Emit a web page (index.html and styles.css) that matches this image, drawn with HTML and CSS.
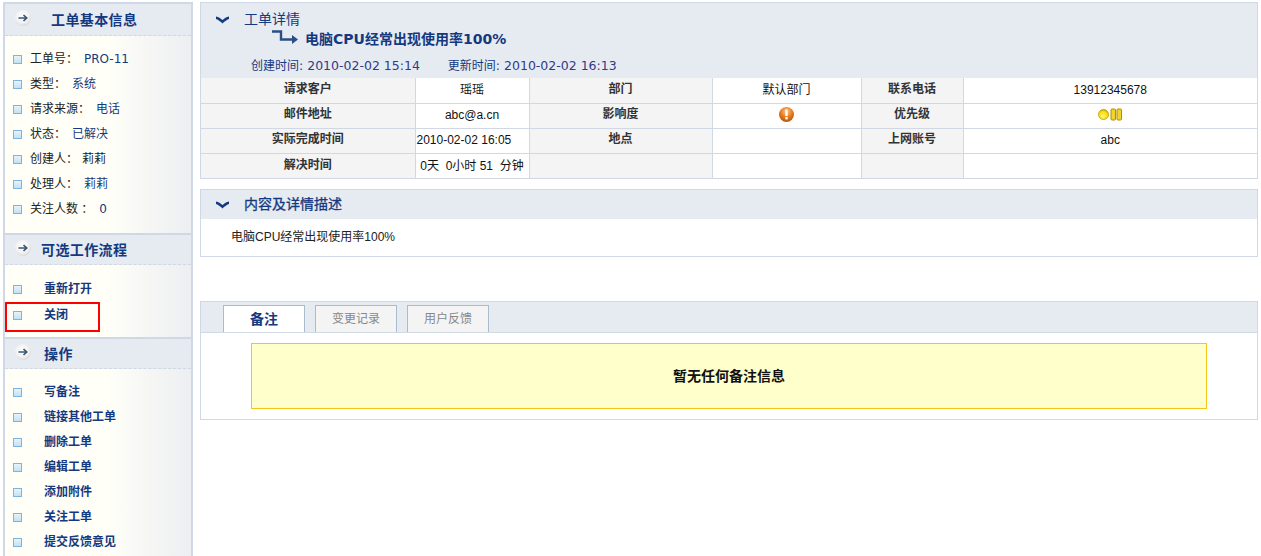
FILE: index.html
```html
<!DOCTYPE html>
<html lang="zh-CN">
<head>
<meta charset="utf-8">
<title>工单详情</title>
<link rel="stylesheet" href="styles.css">
</head>
<body>
<svg class="defs" width="0" height="0" aria-hidden="true">
  <defs>
    <radialGradient id="gc" cx="45%" cy="40%" r="60%"><stop offset="0" stop-color="#ffffff"/><stop offset="0.7" stop-color="#f1f1f1"/><stop offset="1" stop-color="#d9d9d9"/></radialGradient>
    <linearGradient id="gb" x1="0" y1="0" x2="0" y2="1"><stop offset="0" stop-color="#eaf4fb"/><stop offset="1" stop-color="#bfe0f5"/></linearGradient>
    <radialGradient id="go" cx="50%" cy="30%" r="70%"><stop offset="0" stop-color="#ffc890"/><stop offset="0.55" stop-color="#e87a1c"/><stop offset="1" stop-color="#b4560e"/></radialGradient>
    <radialGradient id="gy" cx="45%" cy="65%" r="65%"><stop offset="0" stop-color="#fff76a"/><stop offset="0.7" stop-color="#f7dc10"/><stop offset="1" stop-color="#c9a400"/></radialGradient>
    <symbol id="i-go" viewBox="0 0 16 16"><circle cx="8" cy="8" r="8" fill="url(#gc)"/><path d="M3.5 8H11M8.5 5l3.2 3-3.2 3" fill="none" stroke="#3c5676" stroke-width="1.7"/></symbol>
    <symbol id="i-sq" viewBox="0 0 9 9"><rect x=".5" y=".5" width="8" height="8" fill="url(#gb)" stroke="#7fb4dc"/></symbol>
    <symbol id="i-ch" viewBox="0 0 15 9"><path d="M1 1.5c2.5.4 4.8 2 6.5 3.6C9.2 3.500 11.500 1.900 14 1.500V4C11.500 5 9.500 6.500 7.500 8.500 5.500 6.500 3.500 5 1 4z" fill="#15397f"/></symbol>
  </defs>
</svg>
<div class="page">
  <aside class="side">
    <div class="side-head"><svg class="go"><use href="#i-go"/></svg><h3 class="side-title t1">工单基本信息</h3></div>
    <ul class="info">
      <li><svg class="sq"><use href="#i-sq"/></svg><span class="k">工单号：</span><span class="v latin">PRO-11</span></li>
      <li><svg class="sq"><use href="#i-sq"/></svg><span class="k">类型：</span><span class="v">系统</span></li>
      <li><svg class="sq"><use href="#i-sq"/></svg><span class="k">请求来源：</span><span class="v">电话</span></li>
      <li><svg class="sq"><use href="#i-sq"/></svg><span class="k">状态：</span><span class="v">已解决</span></li>
      <li><svg class="sq"><use href="#i-sq"/></svg><span class="k">创建人：</span><span class="k">莉莉</span></li>
      <li><svg class="sq"><use href="#i-sq"/></svg><span class="k">处理人：</span><span class="v">莉莉</span></li>
      <li><svg class="sq"><use href="#i-sq"/></svg><span class="k">关注人数 ：</span><span class="v latin">0</span></li>
    </ul>
    <div class="side-head"><svg class="go"><use href="#i-go"/></svg><h3 class="side-title t2">可选工作流程</h3></div>
    <ul class="acts flow">
      <li><svg class="sq"><use href="#i-sq"/></svg><a>重新打开</a></li>
      <li class="marked"><svg class="sq"><use href="#i-sq"/></svg><a>关闭</a><span class="mark"></span></li>
    </ul>
    <div class="side-head"><svg class="go"><use href="#i-go"/></svg><h3 class="side-title t3">操作</h3></div>
    <ul class="acts">
      <li><svg class="sq"><use href="#i-sq"/></svg><a>写备注</a></li>
      <li><svg class="sq"><use href="#i-sq"/></svg><a>链接其他工单</a></li>
      <li><svg class="sq"><use href="#i-sq"/></svg><a>删除工单</a></li>
      <li><svg class="sq"><use href="#i-sq"/></svg><a>编辑工单</a></li>
      <li><svg class="sq"><use href="#i-sq"/></svg><a>添加附件</a></li>
      <li><svg class="sq"><use href="#i-sq"/></svg><a>关注工单</a></li>
      <li><svg class="sq"><use href="#i-sq"/></svg><a>提交反馈意见</a></li>
    </ul>
  </aside>
  <main class="main">
    <section class="panel">
      <div class="detail-head">
        <div class="head-row"><svg class="ch"><use href="#i-ch"/></svg><h2 class="h-detail">工单详情</h2></div>
        <div class="subject">
          <svg class="flow-ic" viewBox="0 0 28 14"><path d="M1 1.500H10V9.500H22" fill="none" stroke="#2a4f82" stroke-width="2.400"/><path d="M21 5l6 4.500-6 4.500z" fill="#2a4f82"/></svg>
          <strong>电脑CPU经常出现使用率100%</strong>
        </div>
        <div class="times"><span>创建时间<i>: 2010-02-02 15:14</i></span><span>更新时间<i>: 2010-02-02 16:13</i></span></div>
      </div>
      <table class="grid">
        <colgroup><col class="c1"><col class="c2"><col class="c3"><col class="c4"><col class="c5"><col class="c6"></colgroup>
        <tr><th>请求客户</th><td>瑶瑶</td><th>部门</th><td>默认部门</td><th>联系电话</th><td class="num">13912345678</td></tr>
        <tr><th>邮件地址</th><td class="num">abc@a.cn</td><th>影响度</th><td><svg class="imp" viewBox="0 0 15 15"><circle cx="7.500" cy="7.500" r="7.500" fill="url(#go)"/><rect x="6.300" y="2.500" width="2.400" height="6.500" fill="#fff"/><rect x="6.300" y="10" width="2.400" height="2.400" fill="#fff"/></svg></td><th>优先级</th><td><svg class="pri" viewBox="0 0 24 13"><circle cx="5.500" cy="6.500" r="5" fill="url(#gy)" stroke="#b89a00" stroke-width=".8"/><rect x="13" y="1" width="4.500" height="11" rx="1" fill="#f5d428" stroke="#b08c00"/><rect x="19" y="1" width="4.500" height="11" rx="1" fill="#f5d428" stroke="#b08c00"/></svg></td></tr>
        <tr><th>实际完成时间</th><td class="num tight">2010-02-02 16:05</td><th>地点</th><td></td><th>上网账号</th><td class="num">abc</td></tr>
        <tr><th>解决时间</th><td class="num">0天&nbsp; 0小时 51&nbsp; 分钟</td><th></th><td></td><th></th><td></td></tr>
      </table>
    </section>
    <section class="panel desc">
      <div class="sec-head"><svg class="ch"><use href="#i-ch"/></svg><h2 class="h-sec">内容及详情描述</h2></div>
      <p class="desc-text">电脑CPU经常出现使用率100%</p>
    </section>
    <section class="panel notes">
      <div class="tabs">
        <span class="tab on">备注</span>
        <span class="tab">变更记录</span>
        <span class="tab">用户反馈</span>
      </div>
      <div class="notes-body"><div class="empty">暂无任何备注信息</div></div>
    </section>
  </main>
</div>
</body>
</html>
```
FILE: styles.css
```css
* { box-sizing: border-box; }
html, body { margin: 0; padding: 0; height: 100%; overflow: hidden; background: #fff; }
body {
  font: 12px/1.2 "Liberation Sans", "Noto Sans CJK SC", sans-serif;
  color: #222;
}
.defs { position: absolute; }
h2, h3, p, ul { margin: 0; padding: 0; }
ul { list-style: none; }

.page { display: flex; height: 556px; padding: 2px 3px 0 3px; }

.side {
  flex: 0 0 190px;
  border: 2px solid #cfd8e4;
  border-width: 2px 2px 0 2px;
  background: linear-gradient(90deg, #fffff8 0%, #fffff8 55%, #eceef1 100%);
}
.side-head {
  display: flex;
  align-items: center;
  height: 32px;
  background: #e6ebf1;
  border-bottom: 1px dashed #cfd8e4;
  padding-left: 10px;
}
.side-head + ul + .side-head, .acts + .side-head { border-top: 2px solid #cfd8e4; }
.go { width: 16px; height: 16px; flex: none; margin-top: -4px; }
.side-title { font-size: 14px; font-weight: 700; color: #15397f; line-height: 18px; letter-spacing: .4px; }
.t1 { margin-left: 20px; }
.t2 { margin-left: 10px; }
.t3 { margin-left: 13px; }

.info { padding: 11px 0 11px; }
.info li, .acts li { display: flex; align-items: center; height: 25px; padding-left: 8px; }
.sq { width: 9px; height: 9px; flex: none; margin-right: 8px; }
.k { color: #222; margin-right: 4px; }
.v { color: #15397f; margin-left: 2px; }
.latin { font-family: "DejaVu Sans", sans-serif; font-size: 12px; }

.acts { padding: 11px 0 9px; }
.acts.flow { padding-bottom: 9px; }
.acts li a { margin-left: 14px; font-weight: 700; color: #15397f; }
.acts.flow li { height: 26px; }
.marked { position: relative; }
.mark { position: absolute; left: 0; top: 0; width: 95px; height: 30px; border: 2px solid #f00; }

.main { flex: 1; margin: 0 0 0 7px; min-width: 0; padding-right: 0; }
.panel { border: 1px solid #cfd8e4; margin-right: 0; }
.panel.desc { margin-top: 10px; height: 68px; }
.panel.notes { margin-top: 44px; }

.detail-head { background: #e6ebf1; height: 75px; padding: 8px 0 0 14px; }
.head-row { display: flex; align-items: center; height: 16px; }
.ch { width: 15px; height: 9px; flex: none; }
.h-detail { font-size: 14px; font-weight: 400; color: #15397f; margin-left: 14px; line-height: 16px; }
.subject { display: flex; align-items: center; height: 20px; margin: 2px 0 0 56px; }
.flow-ic { width: 28px; height: 14px; flex: none; margin-top: -5px; }
.subject strong { font: 700 14px/20px "DejaVu Sans", "Noto Sans CJK SC", sans-serif; color: #15397f; margin-left: 6px; }
.times { display: flex; gap: 28px; margin: 9px 0 0 36px; color: #15397f; line-height: 16px; font-size: 12px; }
.times i { font: 12.500px/16px "DejaVu Sans", sans-serif; color: #33398a; }

.grid { width: 100%; border-collapse: collapse; table-layout: fixed; }
.c1 { width: 214px; } .c2 { width: 114px; } .c3 { width: 183px; } .c4 { width: 149px; } .c5 { width: 102px; }
.grid th, .grid td { height: 25px; padding: 0; border: 1px solid #cfd8e4; text-align: center; vertical-align: middle; font-size: 12px; }
.grid tr:first-child th, .grid tr:first-child td { border-top: 0; }
.grid tr:last-child th, .grid tr:last-child td { border-bottom: 0; }
.grid th:first-child { border-left: 0; }
.grid td:last-child { border-right: 0; }
.grid th { background: #f4f4f4; color: #333; font-weight: 700; padding-bottom: 2px; }
.grid td { background: #fff; color: #111; }
.num { color: #2b2b6a; }
.grid .tight { text-align: left; padding-left: 1px; white-space: nowrap; }
.imp { display: block; width: 15px; height: 15px; margin: -3px auto 0; }
.pri { display: block; width: 24px; height: 13px; margin: -3px auto 0; }

.sec-head { display: flex; align-items: center; height: 29px; background: #e6ebf1; padding-left: 14px; }
.h-sec { font-size: 14px; font-weight: 400; color: #15397f; margin-left: 14px; -webkit-text-stroke: .3px #15397f; }
.desc-text { padding: 10px 0 0 30px; line-height: 16px; color: #222; }

.tabs { display: flex; gap: 10px; height: 31px; padding: 3px 0 0 22px; background: #e6ebf1; border-bottom: 1px solid #cfd8e4; }
.tab {
  width: 82px; height: 27px; border: 1px solid #a9bccf; border-bottom: 0;
  display: flex; align-items: center; justify-content: center;
  background: #f4f4f4; color: #888; font-size: 12px;
}
.tab.on { background: #fff; color: #15397f; font-size: 14px; font-weight: 700; }
.notes-body { padding: 10px 50px; height: 86px; }
.empty {
  height: 66px; border: 1px solid #f5c518; background: #ffffcc;
  display: flex; align-items: center; justify-content: center;
  font-size: 14px; font-weight: 700; color: #111;
}
```
